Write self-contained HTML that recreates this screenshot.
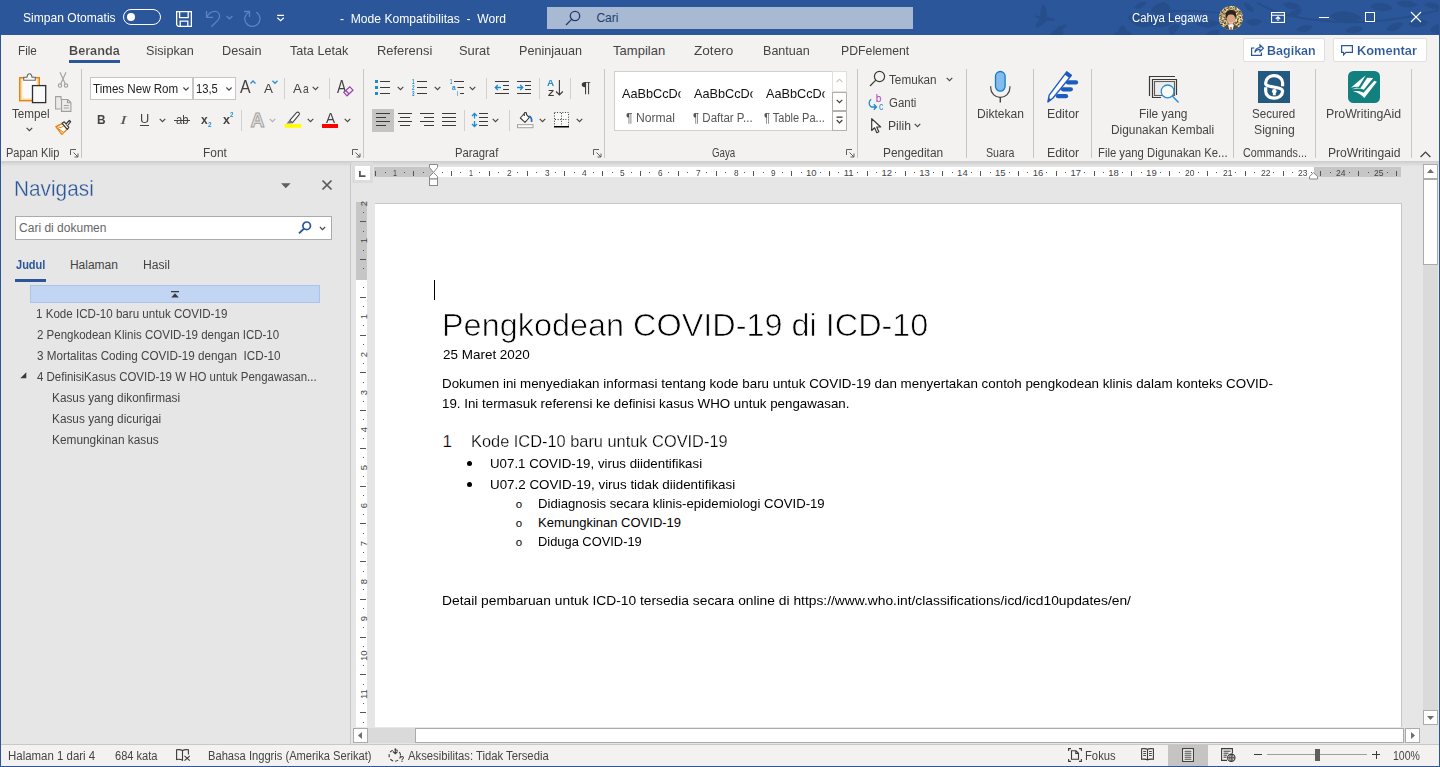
<!DOCTYPE html>
<html lang="id">
<head>
<meta charset="utf-8">
<title>Mode Kompatibilitas - Word</title>
<style>
*{box-sizing:border-box;margin:0;padding:0}
html,body{width:1440px;height:767px;overflow:hidden;background:#e6e6e6}
body{font-family:"Liberation Sans",sans-serif;font-size:12px;color:#444;position:relative}
.a{position:absolute}
.t{position:absolute;white-space:pre;line-height:1;transform-origin:0 0}
svg{position:absolute;overflow:visible}
#title{left:0;top:0;width:1440px;height:35px;background:#2b579a}
#search{left:547px;top:7px;width:366px;height:22px;background:#a7b9d3}
#tabs{left:1px;top:35px;width:1438px;height:30px;background:#f3f2f1}
#ribbon{left:1px;top:65px;width:1438px;height:96px;background:#f3f2f1}
#ribshadow{left:1px;top:161px;width:1438px;height:6px;background:linear-gradient(#cdcbca 0,#d3d3d3 25%,#dadada 50%,#e1e1e1 75%,#e6e6e6 100%)}
.gsep{position:absolute;top:69px;width:1px;height:89px;background:#c8c6c4}
.sep{position:absolute;width:1px;height:21px;background:#d2d0ce}
.box{position:absolute;background:#fff;border:1px solid #c8c6c4}
#nav{left:1px;top:167px;width:349px;height:577px;background:#e6e6e6}
#navdiv{left:350px;top:164px;width:1px;height:581px;background:#c6c6c6}
#page{left:375px;top:203px;width:1027px;height:524px;background:#fff;border-top:1px solid #c6c6c6;border-right:1px solid #c6c6c6}
#status{left:1px;top:745px;width:1438px;height:21px;background:#f3f2f1}
#frameL{left:0;top:0;width:1px;height:767px;background:#2b579a}
#frameR{left:1439px;top:0;width:1px;height:767px;background:#2b579a}
#frameB{left:0;top:766px;width:1440px;height:1px;background:#2b579a}
.vr{font-size:9.5px;color:#444;width:9px;height:9px;text-align:center;transform:rotate(-90deg);transform-origin:50% 50%}

</style>
</head>
<body>
<div id="title" class="a"></div>
<!-- title bar decorative pattern -->
<svg id="deco" style="left:1000px;top:0" width="440" height="35" viewBox="1000 0 440 35">
<g fill="#264e8b">
<path d="M1043 4C1046 6 1047.500 10 1046.500 17L1054.500 18.500C1055.500 19.500 1055 21 1053 21L1047 20.500C1044 24 1040 27 1036.500 28C1035 27 1036 23 1039.500 19L1034 16.800L1035 15.200L1040.500 16.500C1040 11 1041 6 1043 4z"/>
<path d="M1050 35C1051 32 1053 30.500 1055.500 30C1056 27.500 1060 24.500 1066.500 24.500C1067.500 25.500 1066 27.500 1062.500 29.500C1063.500 31 1063.500 33 1063 35z"/>
<path d="M1113.500 35C1114 33 1116 32 1118.500 32C1118 28.500 1120 25.500 1122.500 25.500S1126.500 28 1126 31C1129 31 1131.500 32.500 1132.500 35z"/>
<path d="M1134 8C1137 3 1142 1 1146 2C1145 7 1140 10 1134 8z"/>
<path d="M1150 12C1152 6 1158 3 1164 2C1170 5 1172 9 1170 12C1164 15 1156 15 1150 12z"/>
<path d="M1127 17C1134 13 1143 13 1150 16C1158 14 1168 15 1176 20C1170 27 1160 29 1150 26C1142 29 1133 26 1127 17z"/>
<path d="M1168 28C1171 24 1176 23 1180 25C1178 31 1173 35 1170 35z"/>
<path d="M1168 10.500C1190 9 1210 11 1228 13L1228 14.500C1210 12.500 1190 10.500 1168 12z"/>
<path d="M1196 24C1202 19 1212 19 1220 23C1213 29 1203 29 1196 24z"/>
<path d="M1205 35C1208 31 1214 29 1219 30L1219 35z"/>
<path d="M1244 2C1249 3 1253 7 1254 12C1248 12 1244 8 1244 2z"/>
<path d="M1246 22C1250 18 1257 18 1262 21C1258 27 1251 27 1246 22z"/>
<path d="M1258 2C1275 12 1300 19 1340 21C1375 22 1410 17 1440 9V11C1410 19 1375 24 1340 23C1300 21 1273 14 1256 3z"/>
<path d="M1283 4C1288 1 1296 2 1301 7C1295 11 1287 10 1283 4z"/>
<path d="M1288 16C1290 11 1296 8 1302 9C1301 15 1295 18 1288 16z"/>
<path d="M1296 30C1300 25 1307 24 1313 26C1310 32 1302 34 1296 30z"/>
<path d="M1330 16C1338 9 1352 10 1362 18C1352 25 1338 24 1330 16z"/>
<path d="M1345 31C1349 26 1357 25 1363 28C1360 34 1351 35 1345 31z"/>
<path d="M1370 6C1376 1 1386 2 1393 8C1386 13 1376 12 1370 6z"/>
<path d="M1396 3C1402 -1 1412 0 1418 5C1412 9 1402 8 1396 3z"/>
<path d="M1386 30C1389 24 1396 21 1403 23C1401 30 1393 33 1386 30z"/>
<path d="M1408 24C1413 19 1422 18 1429 22C1424 28 1414 29 1408 24z"/>
<path d="M1424 4C1429 1 1436 2 1440 6V9C1434 10 1428 8 1424 4z"/>
<path d="M1430 30C1432 26 1436 24 1440 24V34C1436 34 1432 33 1430 30z"/>
</g></svg>
<div id="search" class="a"></div>
<!-- autosave toggle -->
<div class="a" style="left:123px;top:9px;width:38px;height:16px;border:1.5px solid #fff;border-radius:8px"></div>
<div class="a" style="left:127px;top:13px;width:8px;height:8px;border-radius:4px;background:#fff"></div>
<!-- save -->
<svg style="left:176px;top:11px" width="16" height="16" viewBox="0 0 16 16" fill="none" stroke="#fff" stroke-width="1.3"><path d="M0.650 0.650h14.700v14.700H2.200L0.650 13.800z"/><path d="M3.600 0.650v6h8.600v-6M4.200 15.350v-5.200h7.600v5.200"/></svg>
<!-- undo -->
<svg style="left:200px;top:5px" width="30" height="26" viewBox="0 0 30 26" fill="none" stroke="#5a84bf" stroke-width="1.3"><path d="M6.500 5.900v6.500h6.600"/><path d="M6.800 12.200C8 9.500 11 6.300 14.900 6.300c3 0 4.700 2.500 4.700 5 0 2.300-1.300 3.800-3 5.300L11.300 21.700"/></svg>
<svg style="left:226px;top:15px" width="7" height="5" viewBox="0 0 7 5" fill="none" stroke="#5a84bf" stroke-width="1.2"><path d="M0.600 1L3.500 3.800L6.400 1"/></svg>
<!-- redo -->
<svg style="left:240px;top:5px" width="30" height="26" viewBox="0 0 30 26" fill="none" stroke="#5a84bf" stroke-width="1.3"><path d="M4 6.500h5.500v5.500"/><path d="M9.400 6.800A7.600 7.600 0 1 0 16.200 7.200"/></svg>
<!-- customize QAT -->
<svg style="left:276px;top:14px" width="9" height="8" viewBox="0 0 9 8" fill="none" stroke="#fff" stroke-width="1.200"><path d="M1.200 1.300H8M1.400 3.800L4.600 6.800L7.800 3.800"/></svg>
<!-- search icon -->
<svg style="left:565px;top:10px" width="16" height="16" viewBox="0 0 16 16" fill="none" stroke="#1e3c6e" stroke-width="1.3"><circle cx="10" cy="6" r="4.700"/><path d="M6.600 9.400L1 15"/></svg>
<!-- avatar -->
<svg style="left:1219px;top:6px" width="24" height="24" viewBox="0 0 24 24"><defs><clipPath id="avc"><circle cx="12" cy="12" r="12"/></clipPath><filter id="avn" x="0" y="0" width="100%" height="100%" color-interpolation-filters="sRGB"><feTurbulence type="fractalNoise" baseFrequency="0.550" numOctaves="2" seed="7"/><feColorMatrix type="matrix" values="1.500 0 0 0 -0.080  1.450 0 0 0 -0.130  1.300 0 0 0 -0.220  0 0 0 0 1"/></filter></defs><g clip-path="url(#avc)"><rect width="24" height="24" fill="#a89872"/><rect width="24" height="24" filter="url(#avn)" opacity="1"/><path d="M6.500 9.500C6.500 5.500 9 4 12.300 4S17.500 6 17 10.500L16 12.500H7.500z" fill="#2e241d"/><ellipse cx="12" cy="12.800" rx="4.100" ry="5.300" fill="#dba583"/><path d="M8 9.800C9.500 8.300 14 8 16 9.800L16.200 8 12 6.500 7.800 8z" fill="#2e241d"/><path d="M9.200 15.300C10.500 16.800 13.500 16.800 14.800 15.300L14 17.500H10z" fill="#e9c0a8"/><path d="M3.500 24C4.500 20.500 7 19.300 9 18.800L12 21.500 15 18.800C17.500 19.300 19.500 20.500 20.500 24z" fill="#4a4d4c"/><path d="M9 18.800L12 18L15 18.800L13.500 24H10.500z" fill="#f3efe9"/><path d="M11.500 21L12.500 21L12.800 24H11.200z" fill="#a8431f"/></g></svg>
<!-- ribbon display options -->
<svg style="left:1271px;top:12px" width="14" height="11" viewBox="0 0 14 11" fill="none" stroke="#fff" stroke-width="1.1"><rect x="0.550" y="0.550" width="12.900" height="9.900"/><path d="M0.500 3.200h13M7 9V5M4.800 7L7 4.800 9.200 7"/></svg>
<!-- min / max / close -->
<div class="a" style="left:1319px;top:17px;width:10px;height:1px;background:#fff"></div>
<div class="a" style="left:1365px;top:12px;width:10px;height:10px;border:1px solid #fff"></div>
<svg style="left:1411px;top:12px" width="10" height="10" viewBox="0 0 10 10" stroke="#fff" stroke-width="1.1"><path d="M0 0L10 10M10 0L0 10"/></svg>

<div id="tabs" class="a"></div>
<div class="a" style="left:69px;top:60px;width:51px;height:3px;background:#2b579a"></div>
<!-- share / comment buttons -->
<div class="a" style="left:1243px;top:38px;width:82px;height:24px;background:#fff;border:1px solid #e1dfdd;border-radius:2px"></div>
<div class="a" style="left:1333px;top:38px;width:94px;height:24px;background:#fff;border:1px solid #e1dfdd;border-radius:2px"></div>
<svg style="left:1251px;top:44px" width="13" height="12" viewBox="0 0 13 12" fill="none" stroke="#2b579a" stroke-width="1.2"><path d="M3.500 4H0.600v7.400h9.800V8.500"/><path d="M3.800 8.500c0.400-3 2.300-4.800 5.200-5V1l3.400 3.300L9 7.600V5.300C6.500 5.300 4.800 6.300 3.800 8.500z"/></svg>
<svg style="left:1341px;top:45px" width="12" height="11" viewBox="0 0 12 11" fill="none" stroke="#2b579a" stroke-width="1.2"><path d="M0.600 0.600h10.800v6.800H5L2.600 9.800V7.400H0.600z"/></svg>

<div id="ribbon" class="a"></div>
<div id="ribshadow" class="a"></div>
<!--RIBBON-->
<!-- ===== Clipboard group ===== -->
<svg style="left:19px;top:73px" width="28" height="31" viewBox="0 0 28 31">
<rect x="0.700" y="4.700" width="19.600" height="23" fill="#fbd79a" stroke="#e8820e" stroke-width="1.400"/>
<rect x="3.200" y="6" width="14.600" height="19.500" fill="#fafafa"/>
<path d="M4.700 7.200V4.200h3.300C8.200 2 9.200 0.700 10.500 0.700S12.800 2 13 4.200h3.300v3z" fill="#fafafa" stroke="#6a6a6a" stroke-width="1.100"/>
<rect x="13.500" y="12.600" width="13.200" height="17" fill="#fafafa" stroke="#2f2f2f" stroke-width="1.300"/>
</svg>
<svg style="left:26px;top:127px" width="7" height="5" viewBox="0 0 7 5" fill="none" stroke="#444" stroke-width="1.200"><path d="M0.600 0.800L3.400 3.600L6.200 0.800"/></svg>
<!-- cut -->
<svg style="left:58px;top:72px" width="10" height="16" viewBox="0 0 10 16" fill="none" stroke="#a19f9d" stroke-width="1.100"><path d="M2 0.300L7.300 12M8 0.300L2.700 12"/><circle cx="2" cy="13.600" r="1.700"/><circle cx="8" cy="13.600" r="1.700"/></svg>
<!-- copy -->
<svg style="left:55px;top:96px" width="17" height="16" viewBox="0 0 17 16" fill="#ebebeb" stroke="#a19f9d" stroke-width="1.100"><path d="M6 3.500V0.600H0.600V13h5"/><path d="M6.500 3.500h6.300l3.100 3.100V15.400H6.500z"/><path d="M12.500 3.800v3h3M8.800 9.500h5M8.800 12h5" fill="none"/></svg>
<!-- format painter -->
<svg style="left:55px;top:119px" width="17" height="17" viewBox="0 0 17 17">
<path d="M0.800 7.700L7.300 4.600L12.200 10.300L6.800 15.400z" fill="#fff" stroke="#e8820e" stroke-width="1.300" stroke-linejoin="round"/>
<path d="M3.200 9.500L8.800 13.500L6.800 15.400z" fill="#fbd79a" stroke="#e8820e" stroke-width="0.900"/>
<path d="M1 7.600L6 8.600L9 6.700" fill="none" stroke="#e8820e" stroke-width="0.900"/>
<path d="M7 4.200L9.300 2.800L13.800 8.300L12.300 10.300z" fill="#fff" stroke="#3b3a39" stroke-width="1.200" stroke-linejoin="round"/>
<path d="M11 5L14.300 1.500L15.700 2.700L12.700 6.500" fill="#fff" stroke="#3b3a39" stroke-width="1.200" stroke-linejoin="round"/>
</svg>
<!-- launcher -->
<svg class="lnch" style="left:70px;top:149px" width="9" height="9" viewBox="0 0 9 9" fill="none" stroke="#605e5c" stroke-width="1"><path d="M0.500 6V0.500H6M3.500 3.500L8 8M8 4.500V8H4.500"/></svg>
<div class="gsep" style="left:81px"></div>

<!-- ===== Font group ===== -->
<div class="box" style="left:90px;top:77px;width:103px;height:23px"></div>
<div class="box" style="left:193px;top:77px;width:43px;height:23px"></div>
<svg class="chv" style="left:183px;top:87px" width="6" height="4" viewBox="0 0 6 4" fill="none" stroke="#444" stroke-width="1.100"><path d="M0.400 0.500L3 3.100L5.600 0.500"/></svg>
<svg class="chv" style="left:226px;top:87px" width="6" height="4" viewBox="0 0 6 4" fill="none" stroke="#444" stroke-width="1.100"><path d="M0.400 0.500L3 3.100L5.600 0.500"/></svg>
<!-- grow / shrink font carets -->
<svg style="left:250px;top:80px" width="6" height="4" viewBox="0 0 6 4" fill="none" stroke="#2a8dd4" stroke-width="1.300"><path d="M0.500 3.500L3 1L5.500 3.500"/></svg>
<svg style="left:272px;top:80px" width="6" height="4" viewBox="0 0 6 4" fill="none" stroke="#2a8dd4" stroke-width="1.300"><path d="M0.500 0.800L3 3.300L5.500 0.800"/></svg>
<div class="sep" style="left:284px;top:78px"></div>
<svg class="chv" style="left:312px;top:86px" width="7" height="5" viewBox="0 0 7 5" fill="none" stroke="#444" stroke-width="1.100"><path d="M0.700 0.800L3.500 3.600L6.300 0.800"/></svg>
<div class="sep" style="left:329px;top:78px"></div>
<!-- clear formatting eraser -->
<!-- underline + chevrons -->
<div class="a" style="left:140px;top:125px;width:9px;height:1px;background:#444"></div>
<svg class="chv" style="left:159px;top:118px" width="7" height="5" viewBox="0 0 7 5" fill="none" stroke="#444" stroke-width="1.100"><path d="M0.700 0.800L3.500 3.600L6.300 0.800"/></svg>
<div class="a" style="left:174px;top:120px;width:16px;height:1px;background:#444"></div>
<div class="sep" style="left:241px;top:110px"></div>
<svg class="chv" style="left:269px;top:118px" width="7" height="5" viewBox="0 0 7 5" fill="none" stroke="#b0aeac" stroke-width="1.100"><path d="M0.700 0.800L3.500 3.600L6.300 0.800"/></svg>
<!-- highlighter -->
<svg style="left:284px;top:111px" width="18" height="18" viewBox="0 0 18 18">
<path d="M5.800 9.300L12.500 1.600c0.700-0.700 1.700-0.700 2.400 0s0.700 1.600 0.100 2.300L8.500 11.700z" fill="#fff" stroke="#444" stroke-width="1.100" stroke-linejoin="round"/>
<path d="M5.600 9L8.800 12L6.500 12.500L2.500 12.400z" fill="#777"/>
<rect x="0.700" y="13" width="16.500" height="3.800" fill="#ffff00"/>
</svg>
<svg class="chv" style="left:307px;top:118px" width="7" height="5" viewBox="0 0 7 5" fill="none" stroke="#444" stroke-width="1.100"><path d="M0.700 0.800L3.500 3.600L6.300 0.800"/></svg>
<div class="a" style="left:322px;top:124px;width:16px;height:4px;background:#ff0000"></div>
<svg class="chv" style="left:344px;top:118px" width="7" height="5" viewBox="0 0 7 5" fill="none" stroke="#444" stroke-width="1.100"><path d="M0.700 0.800L3.500 3.600L6.300 0.800"/></svg>

<svg class="lnch" style="left:352px;top:149px" width="9" height="9" viewBox="0 0 9 9" fill="none" stroke="#605e5c" stroke-width="1"><path d="M0.500 6V0.500H6M3.500 3.500L8 8M8 4.500V8H4.500"/></svg>
<div class="gsep" style="left:363px"></div>

<!-- ===== Paragraph group ===== -->
<!-- bullets -->
<svg style="left:375px;top:80px" width="16" height="15" viewBox="0 0 16 15"><g fill="#1e8bcd"><rect x="0" y="0" width="3" height="3"/><rect x="0" y="6" width="3" height="3"/><rect x="0" y="12" width="3" height="3"/></g><g fill="#3b3a39"><rect x="5" y="1" width="10" height="1"/><rect x="5" y="7" width="10" height="1"/><rect x="5" y="13" width="10" height="1"/></g></svg>
<svg class="chv" style="left:397px;top:86px" width="7" height="5" viewBox="0 0 7 5" fill="none" stroke="#444" stroke-width="1.100"><path d="M0.700 0.800L3.500 3.600L6.300 0.800"/></svg>
<!-- numbering lines -->
<svg style="left:417px;top:80px" width="10" height="15" viewBox="0 0 10 15" fill="#3b3a39"><rect x="0" y="1" width="10" height="1"/><rect x="0" y="7" width="10" height="1"/><rect x="0" y="13" width="10" height="1"/></svg>
<svg class="chv" style="left:434px;top:86px" width="7" height="5" viewBox="0 0 7 5" fill="none" stroke="#444" stroke-width="1.100"><path d="M0.700 0.800L3.500 3.600L6.300 0.800"/></svg>
<!-- multilevel lines -->
<svg style="left:454px;top:80px" width="10" height="15" viewBox="0 0 10 15" fill="#3b3a39"><rect x="0" y="1" width="10" height="1"/><rect x="3.400" y="7" width="6.600" height="1"/><rect x="6" y="13" width="4" height="1"/></svg>
<svg class="chv" style="left:469px;top:86px" width="7" height="5" viewBox="0 0 7 5" fill="none" stroke="#444" stroke-width="1.100"><path d="M0.700 0.800L3.500 3.600L6.300 0.800"/></svg>
<div class="sep" style="left:486px;top:78px"></div>
<!-- decrease indent -->
<svg style="left:494px;top:80px" width="16" height="15" viewBox="0 0 16 15"><g fill="#3b3a39"><rect x="1" y="1" width="14" height="1"/><rect x="9" y="5" width="6" height="1"/><rect x="9" y="9" width="6" height="1"/><rect x="1" y="13" width="14" height="1"/></g><path d="M7 7.500H1.300M3.800 5L1.300 7.500L3.800 10" fill="none" stroke="#1e8bcd" stroke-width="1.300"/></svg>
<!-- increase indent -->
<svg style="left:516px;top:80px" width="16" height="15" viewBox="0 0 16 15"><g fill="#3b3a39"><rect x="1" y="1" width="14" height="1"/><rect x="9" y="5" width="6" height="1"/><rect x="9" y="9" width="6" height="1"/><rect x="1" y="13" width="14" height="1"/></g><path d="M1 7.500H6.700M4.200 5L6.700 7.500L4.200 10" fill="none" stroke="#1e8bcd" stroke-width="1.300"/></svg>
<div class="sep" style="left:539px;top:78px"></div>
<!-- sort arrow -->
<svg style="left:555px;top:80px" width="9" height="16" viewBox="0 0 9 16" fill="none" stroke="#3b3a39" stroke-width="1.100"><path d="M4.400 0V15M1 11.500L4.400 15L7.800 11.500"/></svg>
<div class="sep" style="left:570px;top:78px"></div>
<!-- align buttons -->
<div class="a" style="left:372px;top:109px;width:22px;height:23px;background:#c6c4c2"></div>
<svg style="left:376px;top:113px" width="14" height="13" viewBox="0 0 14 13" fill="#3b3a39"><rect x="0" y="0" width="14" height="1"/><rect x="0" y="4" width="10" height="1"/><rect x="0" y="8" width="14" height="1"/><rect x="0" y="12" width="10" height="1"/></svg>
<svg style="left:398px;top:113px" width="14" height="13" viewBox="0 0 14 13" fill="#3b3a39"><rect x="0" y="0" width="14" height="1"/><rect x="2" y="4" width="10" height="1"/><rect x="0" y="8" width="14" height="1"/><rect x="2" y="12" width="10" height="1"/></svg>
<svg style="left:420px;top:113px" width="14" height="13" viewBox="0 0 14 13" fill="#3b3a39"><rect x="0" y="0" width="14" height="1"/><rect x="4" y="4" width="10" height="1"/><rect x="0" y="8" width="14" height="1"/><rect x="4" y="12" width="10" height="1"/></svg>
<svg style="left:442px;top:113px" width="14" height="13" viewBox="0 0 14 13" fill="#3b3a39"><rect x="0" y="0" width="14" height="1"/><rect x="0" y="4" width="14" height="1"/><rect x="0" y="8" width="14" height="1"/><rect x="0" y="12" width="14" height="1"/></svg>
<div class="sep" style="left:464px;top:110px"></div>
<!-- line spacing -->
<svg style="left:471px;top:113px" width="18" height="14" viewBox="0 0 18 14"><g fill="#3b3a39"><rect x="8" y="0" width="9" height="1"/><rect x="8" y="4" width="9" height="1"/><rect x="8" y="8" width="9" height="1"/><rect x="8" y="12" width="9" height="1"/></g><path d="M3.500 0.500V5.500M1 3L3.500 0.500L6 3M3.500 8V13.500M1 11L3.500 13.500L6 11" fill="none" stroke="#1e8bcd" stroke-width="1.300"/></svg>
<svg class="chv" style="left:492px;top:118px" width="7" height="5" viewBox="0 0 7 5" fill="none" stroke="#444" stroke-width="1.100"><path d="M0.700 0.800L3.500 3.600L6.300 0.800"/></svg>
<div class="sep" style="left:509px;top:110px"></div>
<!-- shading -->
<svg style="left:517px;top:111px" width="17" height="18" viewBox="0 0 17 18"><path d="M7.300 2.500L3.300 7L8 11.300L12.300 6.500L9.500 3.700V2.300C9.500 1.300 7.300 1.300 7.300 2.300V5" fill="#fff" stroke="#3b3a39" stroke-width="1.100" stroke-linejoin="round"/><path d="M12.300 5c2 1.200 2.600 3.300 2.300 6" fill="none" stroke="#1e6fbf" stroke-width="1.700"/><rect x="0.500" y="13.700" width="15.500" height="3" fill="#fff" stroke="#a19f9d" stroke-width="1"/></svg>
<svg class="chv" style="left:539px;top:118px" width="7" height="5" viewBox="0 0 7 5" fill="none" stroke="#444" stroke-width="1.100"><path d="M0.700 0.800L3.500 3.600L6.300 0.800"/></svg>
<!-- borders -->
<svg style="left:554px;top:112px" width="15" height="16" viewBox="0 0 15 16"><rect x="0.500" y="0.500" width="14" height="14" fill="#fafafa" stroke="#3b3a39" stroke-width="1" stroke-dasharray="1 1.600"/><path d="M7.500 1V14M1 7.500H14" stroke="#3b3a39" stroke-width="1" stroke-dasharray="1 1.600" fill="none"/><rect x="0" y="14" width="15" height="1.500" fill="#000"/></svg>
<svg class="chv" style="left:576px;top:118px" width="7" height="5" viewBox="0 0 7 5" fill="none" stroke="#444" stroke-width="1.100"><path d="M0.700 0.800L3.500 3.600L6.300 0.800"/></svg>
<svg class="lnch" style="left:593px;top:149px" width="9" height="9" viewBox="0 0 9 9" fill="none" stroke="#605e5c" stroke-width="1"><path d="M0.500 6V0.500H6M3.500 3.500L8 8M8 4.500V8H4.500"/></svg>
<div class="gsep" style="left:604px"></div>

<!-- ===== Styles gallery ===== -->
<div class="a" style="left:614px;top:71px;width:233px;height:60px;background:#fff;border:1px solid #d2d0ce"></div>
<div class="a" style="left:832px;top:71px;width:15px;height:21px;border:1px solid #e1dfdd;background:#fff"></div>
<div class="a" style="left:832px;top:92px;width:15px;height:19px;border:1px solid #b3b0ad;background:#fff"></div>
<div class="a" style="left:832px;top:111px;width:15px;height:20px;border:1px solid #b3b0ad;background:#fff"></div>
<svg style="left:836px;top:78px" width="7" height="5" viewBox="0 0 7 5" fill="none" stroke="#c8c6c4" stroke-width="1.100"><path d="M0.700 4L3.500 1.200L6.300 4"/></svg>
<svg style="left:836px;top:99px" width="7" height="5" viewBox="0 0 7 5" fill="none" stroke="#3b3a39" stroke-width="1.200"><path d="M0.700 0.800L3.500 3.600L6.300 0.800"/></svg>
<svg style="left:836px;top:116px" width="7" height="8" viewBox="0 0 7 8" fill="none" stroke="#3b3a39" stroke-width="1.200"><path d="M0.500 1.200H6.500M0.700 4L3.500 6.800L6.300 4"/></svg>
<svg class="lnch" style="left:846px;top:149px" width="9" height="9" viewBox="0 0 9 9" fill="none" stroke="#605e5c" stroke-width="1"><path d="M0.500 6V0.500H6M3.500 3.500L8 8M8 4.500V8H4.500"/></svg>
<div class="gsep" style="left:857px"></div>
<!-- ===== Editing ===== -->
<svg style="left:869px;top:70px" width="17" height="17" viewBox="0 0 17 17" fill="none" stroke="#3b3a39" stroke-width="1.200"><circle cx="10.500" cy="6.500" r="5.100"/><path d="M6.800 10.200L1 16"/></svg>
<svg class="chv" style="left:946px;top:77px" width="7" height="5" viewBox="0 0 7 5" fill="none" stroke="#444" stroke-width="1.100"><path d="M0.700 0.800L3.500 3.600L6.300 0.800"/></svg>
<svg style="left:868px;top:98px" width="10" height="13" viewBox="0 0 10 13" fill="none" stroke="#1e8bcd" stroke-width="1.300"><path d="M3.200 1.200C0.800 3 0.500 6 2.500 8.300L3.500 9H8.300M5.800 6.300L8.500 9L5.800 11.700"/></svg>
<svg style="left:871px;top:118px" width="11" height="16" viewBox="0 0 11 16" fill="#fff" stroke="#3b3a39" stroke-width="1.200" stroke-linejoin="round"><path d="M0.700 0.700V12.500L3.600 9.800L5.800 14.700L7.800 13.800L5.700 9H9.700z"/></svg>
<svg class="chv" style="left:914px;top:123px" width="7" height="5" viewBox="0 0 7 5" fill="none" stroke="#444" stroke-width="1.100"><path d="M0.700 0.800L3.500 3.600L6.300 0.800"/></svg>
<div class="gsep" style="left:966px"></div>
<!-- ===== Dictate ===== -->
<svg style="left:989px;top:70px" width="23" height="34" viewBox="0 0 23 34"><rect x="6.500" y="1.500" width="9.600" height="19.600" rx="4.800" fill="#83bcec" stroke="#1479c9" stroke-width="1.300"/><path d="M1.700 16.200v1.600a9.600 9.600 0 0 0 19.200 0v-1.600" fill="none" stroke="#444" stroke-width="1.200"/><path d="M11.300 27.300V32.600" stroke="#444" stroke-width="1.400"/></svg>
<div class="gsep" style="left:1033px"></div>
<!-- ===== Editor ===== -->
<svg style="left:1046px;top:70px" width="34" height="34" viewBox="0 0 34 34"><g stroke="#1b5cbe" stroke-width="4.300" stroke-linecap="round"><path d="M22 12.400H30"/><path d="M17 19.300H24.800"/><path d="M12 26.200H20"/></g><path d="M20.700 1.800L25.400 5.400L6.800 28.300L1.900 31.900L3.200 25.200z" fill="#fff" stroke="#1b5cbe" stroke-width="1.400" stroke-linejoin="round"/><path d="M20.700 1.800L25.400 5.400L23.300 8L18.600 4.400z" fill="#1b5cbe"/><path d="M1.900 31.900L2.700 27.800L5.300 29.700z" fill="#1b5cbe"/></svg>
<div class="gsep" style="left:1091px"></div>
<!-- ===== Reuse files ===== -->
<svg style="left:1148px;top:75px" width="32" height="29" viewBox="0 0 32 29" fill="none"><path d="M27 1.500H1.500V21" stroke="#3b3a39" stroke-width="1.200"/><path d="M13 22.500H4.500V4.500H28.500V20" stroke="#3b3a39" stroke-width="1.200"/><rect x="6.500" y="6.500" width="20" height="14" fill="#ececec" stroke="#605e5c" stroke-width="1.100"/><circle cx="19.600" cy="16.400" r="6.400" fill="#fafafa" stroke="#2a8dd4" stroke-width="1.300"/><path d="M24.300 21L30.600 27.600" stroke="#2a8dd4" stroke-width="1.400"/></svg>
<div class="gsep" style="left:1233px"></div>
<!-- ===== Secured Signing ===== -->
<svg style="left:1258px;top:71px" width="32" height="32" viewBox="0 0 32 32"><rect width="32" height="32" fill="#255a80"/><path d="M24.600 15.300V11.700A8.450 7 0 0 0 7.700 11.700V12.800C7.700 16.800 24.600 15.200 24.600 20.200A8.450 7 0 0 1 7.700 20.200V16.300" fill="none" stroke="#fff" stroke-width="3.200"/><circle cx="16.300" cy="20.200" r="2.300" fill="#fff"/><path d="M15.200 20.500h2.200l0.500 3.800h-3.200z" fill="#fff"/></svg>
<div class="gsep" style="left:1315px"></div>
<!-- ===== ProWritingAid ===== -->
<svg style="left:1348px;top:71px" width="32" height="32" viewBox="0 0 32 32"><rect width="32" height="32" rx="5.500" fill="#12807f"/><g fill="#fff"><path d="M2.900 16.800C8 12.500 13 8 17.700 4.600L10.800 15.800C8 15.500 5.500 16 2.900 16.800z"/><path d="M19.200 6.800L25.200 7.100L15.800 18.700C12 16.800 8 17.300 4.100 18.500C7 16.500 10 16.200 12.300 17.300z"/><path d="M26.200 9.800L28.900 10.800L16.300 26.900C13 23.500 9.500 21.300 5.100 20.200C9 19.500 12.500 20 15.500 21.800z"/></g></svg>
<div class="gsep" style="left:1411px"></div>
<svg style="left:1420px;top:151px" width="11" height="7" viewBox="0 0 11 7" fill="none" stroke="#3b3a39" stroke-width="1.200"><path d="M0.600 6L5.500 1.100L10.400 6"/></svg>

<!--R4-->
<div id="nav" class="a"></div>
<div id="navdiv" class="a"></div>
<!-- ===== Navigation pane ===== -->
<svg style="left:281px;top:183px" width="10" height="6" viewBox="0 0 10 6"><path d="M0 0.300H9.600L4.800 5.300z" fill="#605e5c"/></svg>
<svg style="left:322px;top:180px" width="10" height="10" viewBox="0 0 10 10" stroke="#5a5856" stroke-width="1.700"><path d="M0.500 0.500L9.500 9.500M9.500 0.500L0.500 9.500"/></svg>
<div class="a" style="left:15px;top:216px;width:317px;height:24px;background:#fff;border:1px solid #ababab"></div>
<svg style="left:298px;top:221px" width="14" height="13" viewBox="0 0 14 13" fill="none" stroke="#2b579a" stroke-width="1.700"><circle cx="8.700" cy="4.800" r="3.800"/><path d="M6 7.600L1 12.400" stroke-width="2"/></svg>
<svg style="left:319px;top:226px" width="7" height="5" viewBox="0 0 7 5" fill="none" stroke="#444" stroke-width="1.100"><path d="M0.900 1L3.500 3.600L6.100 1"/></svg>
<div class="a" style="left:15px;top:279px;width:31px;height:3px;background:#2b579a"></div>
<div class="a" style="left:30px;top:285px;width:290px;height:18px;background:#c2d5f2;border:1px solid #a8c3ec"></div>
<svg style="left:171px;top:291px" width="8" height="7" viewBox="0 0 8 7" fill="#3b3a39"><rect x="0" y="0" width="8" height="1.300"/><path d="M4 2.300L7.800 6.500H0.200z"/></svg>
<svg style="left:20px;top:372px" width="7" height="7" viewBox="0 0 7 7"><path d="M6.300 0.300V6.300H0.300z" fill="#3b3a39"/></svg>

<!-- ===== Document area: rulers & scrollbars ===== -->
<div class="a" style="left:352px;top:162px;width:21px;height:21px;background:#dcdcdc"></div>
<div class="a" style="left:355px;top:166px;width:15px;height:14px;background:#fff"></div>
<svg style="left:359px;top:171px" width="7" height="6" viewBox="0 0 7 6" fill="none" stroke="#555" stroke-width="1.800"><path d="M0.900 0V5.100H6.500"/></svg>
<div class="a" style="left:374px;top:167px;width:1027px;height:10px;background:#c6c6c6"></div>
<div class="a" style="left:433px;top:167px;width:881px;height:10px;background:#fff"></div>
<svg style="left:0;top:0" width="1440" height="200" viewBox="0 0 1440 200" shape-rendering="crispEdges"><path d="M375 171h1v5h-1zM413 171h1v5h-1zM451 171h1v5h-1zM489 171h1v5h-1zM527 171h1v5h-1zM564 171h1v5h-1zM602 171h1v5h-1zM640 171h1v5h-1zM678 171h1v5h-1zM716 171h1v5h-1zM753 171h1v5h-1zM791 171h1v5h-1zM829 171h1v5h-1zM867 171h1v5h-1zM905 171h1v5h-1zM942 171h1v5h-1zM980 171h1v5h-1zM1018 171h1v5h-1zM1056 171h1v5h-1zM1094 171h1v5h-1zM1131 171h1v5h-1zM1169 171h1v5h-1zM1207 171h1v5h-1zM1245 171h1v5h-1zM1283 171h1v5h-1zM1320 171h1v5h-1zM1358 171h1v5h-1zM1396 171h1v5h-1zM385 172h1v1h-1zM404 172h1v1h-1zM423 172h1v1h-1zM442 172h1v1h-1zM460 172h1v1h-1zM479 172h1v1h-1zM498 172h1v1h-1zM517 172h1v1h-1zM536 172h1v1h-1zM555 172h1v1h-1zM574 172h1v1h-1zM593 172h1v1h-1zM612 172h1v1h-1zM631 172h1v1h-1zM649 172h1v1h-1zM668 172h1v1h-1zM687 172h1v1h-1zM706 172h1v1h-1zM725 172h1v1h-1zM744 172h1v1h-1zM763 172h1v1h-1zM782 172h1v1h-1zM801 172h1v1h-1zM820 172h1v1h-1zM838 172h1v1h-1zM857 172h1v1h-1zM876 172h1v1h-1zM895 172h1v1h-1zM914 172h1v1h-1zM933 172h1v1h-1zM952 172h1v1h-1zM971 172h1v1h-1zM990 172h1v1h-1zM1009 172h1v1h-1zM1027 172h1v1h-1zM1046 172h1v1h-1zM1065 172h1v1h-1zM1084 172h1v1h-1zM1103 172h1v1h-1zM1122 172h1v1h-1zM1141 172h1v1h-1zM1160 172h1v1h-1zM1179 172h1v1h-1zM1198 172h1v1h-1zM1216 172h1v1h-1zM1235 172h1v1h-1zM1254 172h1v1h-1zM1273 172h1v1h-1zM1292 172h1v1h-1zM1311 172h1v1h-1zM1330 172h1v1h-1zM1349 172h1v1h-1zM1368 172h1v1h-1zM1387 172h1v1h-1z" fill="#555"/></svg>
<svg style="left:429px;top:164px" width="10" height="23" viewBox="0 0 10 23" fill="#fff" stroke="#8a8a8a" stroke-width="1"><path d="M0.500 0.500H8.500V3.500L4.500 8.500L0.500 3.500z"/><path d="M4.500 8.500L8.500 12.500V15H0.500V12.500z"/><rect x="0.500" y="15" width="8" height="6.500"/></svg>
<svg style="left:1309px;top:172px" width="10" height="8" viewBox="0 0 10 8" fill="#fff" stroke="#8a8a8a" stroke-width="1"><path d="M4.500 0.700L8.500 4.500V7H0.500V4.500z"/></svg>
<div class="a" style="left:356px;top:202px;width:11px;height:525px;background:#fff"></div>
<div class="a" style="left:356px;top:202px;width:11px;height:78px;background:#c6c6c6"></div>
<svg style="left:0;top:0" width="400" height="767" viewBox="0 0 400 767" shape-rendering="crispEdges"><path d="M360 221h6v1h-6zM360 259h6v1h-6zM360 297h6v1h-6zM360 335h6v1h-6zM360 372h6v1h-6zM360 410h6v1h-6zM360 448h6v1h-6zM360 486h6v1h-6zM360 523h6v1h-6zM360 561h6v1h-6zM360 599h6v1h-6zM360 637h6v1h-6zM360 674h6v1h-6zM360 712h6v1h-6zM363 212h1v1h-1zM363 231h1v1h-1zM363 250h1v1h-1zM363 268h1v1h-1zM363 287h1v1h-1zM363 306h1v1h-1zM363 325h1v1h-1zM363 344h1v1h-1zM363 363h1v1h-1zM363 382h1v1h-1zM363 401h1v1h-1zM363 419h1v1h-1zM363 438h1v1h-1zM363 457h1v1h-1zM363 476h1v1h-1zM363 495h1v1h-1zM363 514h1v1h-1zM363 533h1v1h-1zM363 552h1v1h-1zM363 571h1v1h-1zM363 589h1v1h-1zM363 608h1v1h-1zM363 627h1v1h-1zM363 646h1v1h-1zM363 665h1v1h-1zM363 684h1v1h-1zM363 703h1v1h-1zM363 722h1v1h-1z" fill="#555"/></svg>
<div class="a" style="left:1423px;top:164px;width:15px;height:561px;background:#dadada"></div>
<div class="a" style="left:1423px;top:164px;width:15px;height:15px;background:#fff;border:1px solid #ababab"></div>
<svg style="left:1427px;top:169px" width="7" height="4" viewBox="0 0 7 4"><path d="M3.500 0L7 4H0z" fill="#6e6e6e"/></svg>
<div class="a" style="left:1423px;top:179px;width:15px;height:86px;background:#fff;border:1px solid #ababab"></div>
<div class="a" style="left:1423px;top:710px;width:15px;height:15px;background:#fff;border:1px solid #ababab"></div>
<svg style="left:1427px;top:716px" width="7" height="4" viewBox="0 0 7 4"><path d="M0 0H7L3.500 4z" fill="#6e6e6e"/></svg>
<div class="a" style="left:353px;top:728px;width:1067px;height:15px;background:#dadada"></div>
<div class="a" style="left:353px;top:728px;width:15px;height:15px;background:#fff;border:1px solid #ababab"></div>
<svg style="left:358px;top:732px" width="4" height="7" viewBox="0 0 4 7"><path d="M4 0V7L0 3.500z" fill="#6e6e6e"/></svg>
<div class="a" style="left:415px;top:728px;width:989px;height:15px;background:#fff;border:1px solid #ababab"></div>
<div class="a" style="left:1405px;top:728px;width:15px;height:15px;background:#fff;border:1px solid #ababab"></div>
<svg style="left:1411px;top:732px" width="4" height="7" viewBox="0 0 4 7"><path d="M0 0V7L4 3.500z" fill="#6e6e6e"/></svg>

<div id="page" class="a"></div>
<!-- text cursor -->
<div class="a" style="left:434px;top:280px;width:1px;height:20px;background:#000"></div>
<!-- bullets -->
<div class="a" style="left:467px;top:461px;width:5px;height:5px;border-radius:3px;background:#000"></div>
<div class="a" style="left:467px;top:482px;width:5px;height:5px;border-radius:3px;background:#000"></div>
<!-- vertical ruler numbers -->
<span class="t vr" style="left:358.500px;top:198.6px">2</span>
<span class="t vr" style="left:358.500px;top:236.4px">1</span>
<span class="t vr" style="left:358.500px;top:312.0px">1</span>
<span class="t vr" style="left:358.500px;top:349.8px">2</span>
<span class="t vr" style="left:358.500px;top:387.6px">3</span>
<span class="t vr" style="left:358.500px;top:425.4px">4</span>
<span class="t vr" style="left:358.500px;top:463.2px">5</span>
<span class="t vr" style="left:358.500px;top:501.0px">6</span>
<span class="t vr" style="left:358.500px;top:538.8px">7</span>
<span class="t vr" style="left:358.500px;top:576.6px">8</span>
<span class="t vr" style="left:358.500px;top:614.4px">9</span>
<span class="t vr" style="left:358.500px;top:652.2px">10</span>
<span class="t vr" style="left:358.500px;top:690.0px">11</span>

<div id="status" class="a"></div>
<!-- ===== Status bar ===== -->
<div class="a" style="left:1px;top:744px;width:1438px;height:1px;background:#c8c8c8"></div>
<!-- proofing -->
<svg style="left:176px;top:749px" width="15" height="12" viewBox="0 0 15 12" fill="none" stroke="#3b3a39" stroke-width="1.100"><path d="M6.500 1.500C5 0.600 2.500 0.500 0.600 0.800V10.500C2.500 10.200 5 10.300 6.500 11.200zM6.500 1.500C8 0.600 10.500 0.500 12.400 0.800V5.500"/><path d="M8.500 6.800L13.800 11.600M13.800 6.800L8.500 11.600"/></svg>
<!-- accessibility -->
<svg style="left:388px;top:747px" width="17" height="16" viewBox="0 0 17 16" fill="none" stroke="#3b3a39" stroke-width="1.100"><circle cx="6.800" cy="8.500" r="5.700" stroke-dasharray="3.200 2"/><path d="M7.300 1.200V6.500M5 4.500L7.300 6.800L9.600 4.500"/></svg>
<!-- focus -->
<svg style="left:1068px;top:748px" width="14" height="14" viewBox="0 0 14 14" fill="none" stroke="#3b3a39" stroke-width="1.100"><path d="M0.600 3V0.600H3M11 0.600H13.400V3M13.400 11V13.400H11M3 13.400H0.600V11"/><path d="M3.500 2.800H8L10.500 5.300V11.200H3.500zM7.800 3V5.500H10.300"/></svg>
<!-- read mode -->
<svg style="left:1141px;top:748px" width="14" height="13" viewBox="0 0 14 13" fill="none" stroke="#3b3a39" stroke-width="1.100"><path d="M6.500 1.300C5 0.500 2.500 0.500 0.600 0.800V11.300C2.500 11 5 11 6.500 11.900zM6.500 1.300C8 0.500 10.500 0.500 12.400 0.800V11.300C10.500 11 8 11 6.500 11.900"/><path d="M2.200 3.500H5M2.200 5.500H5M2.200 7.500H5M8 3.500H10.800M8 5.500H10.800M8 7.500H10.800" stroke-width="0.900"/></svg>
<!-- print layout (selected) -->
<div class="a" style="left:1168px;top:745px;width:40px;height:21px;background:#c6c4c2"></div>
<svg style="left:1182px;top:748px" width="12" height="14" viewBox="0 0 12 14" fill="#fff" stroke="#3b3a39" stroke-width="1.100"><rect x="0.600" y="0.600" width="10.800" height="12.800"/><path d="M2.500 3.200H9.500M2.500 5.200H9.500M2.500 7.200H9.500M2.500 9.200H9.500M2.500 11.200H9.500" stroke-width="1"/></svg>
<!-- web layout -->
<svg style="left:1221px;top:748px" width="15" height="14" viewBox="0 0 15 14" fill="none" stroke="#3b3a39" stroke-width="1.100"><path d="M6 12.400H0.600V0.600H11.400V5.500"/><path d="M2.500 3.200H9.500M2.500 5.200H7.500M2.500 7.200H6M2.500 9.200H5.500" stroke-width="1"/><circle cx="10.300" cy="9.800" r="3.700" fill="#f3f2f1"/><path d="M6.600 9.800H14M10.300 6.100V13.500" stroke-width="0.900"/><ellipse cx="10.300" cy="9.800" rx="1.700" ry="3.700" stroke-width="0.800"/></svg>
<!-- zoom slider -->
<div class="a" style="left:1254px;top:754px;width:8px;height:1px;background:#3b3a39"></div>
<div class="a" style="left:1267px;top:754px;width:100px;height:1px;background:#a19f9d"></div>
<div class="a" style="left:1315px;top:749px;width:5px;height:12px;background:#605e5c"></div>
<div class="a" style="left:1372px;top:754px;width:8px;height:1px;background:#3b3a39"></div>
<div class="a" style="left:1375.500px;top:751px;width:1px;height:8px;background:#3b3a39"></div>

<div id="frameL" class="a"></div>
<div id="frameR" class="a"></div>
<div id="frameB" class="a"></div>

<!-- text layer -->
<span class="t" style="left:23.4px;top:12px;font-size:12px;color:#fff;transform:scaleX(1.0066);">Simpan Otomatis</span>
<span class="t" style="left:340.4px;top:13px;font-size:12px;color:#fff;transform:scaleX(1.0091);">-  Mode Kompatibilitas  -  Word</span>
<span class="t" style="left:596.4px;top:12px;font-size:12px;color:#1e3c6e;">Cari</span>
<span class="t" style="left:1132.4px;top:12px;font-size:12px;color:#fff;transform:scaleX(0.9500);">Cahya Legawa</span>
<span class="t" style="left:17.8px;top:44px;font-size:13px;color:#444;transform:scaleX(0.9000);">File</span>
<span class="t" style="left:68.7px;top:44px;font-size:13px;color:#444;transform:scaleX(0.9745);font-weight:700;-webkit-text-stroke:0.15px #f3f2f1;">Beranda</span>
<span class="t" style="left:146.4px;top:44px;font-size:13px;color:#444;transform:scaleX(0.9729);">Sisipkan</span>
<span class="t" style="left:221.7px;top:44px;font-size:13px;color:#444;transform:scaleX(0.9744);">Desain</span>
<span class="t" style="left:290.4px;top:44px;font-size:13px;color:#444;transform:scaleX(0.9717);">Tata Letak</span>
<span class="t" style="left:376.7px;top:44px;font-size:13px;color:#444;transform:scaleX(0.9944);">Referensi</span>
<span class="t" style="left:459.4px;top:44px;font-size:13px;color:#444;transform:scaleX(0.9900);">Surat</span>
<span class="t" style="left:519.4px;top:44px;font-size:13px;color:#444;transform:scaleX(0.9688);">Peninjauan</span>
<span class="t" style="left:613.1px;top:44px;font-size:13px;color:#444;">Tampilan</span>
<span class="t" style="left:694.4px;top:44px;font-size:13px;color:#444;transform:scaleX(1.0459);">Zotero</span>
<span class="t" style="left:762.7px;top:44px;font-size:13px;color:#444;transform:scaleX(0.9660);">Bantuan</span>
<span class="t" style="left:840.8px;top:44px;font-size:13px;color:#444;transform:scaleX(0.9444);">PDFelement</span>
<span class="t" style="left:1266.9px;top:44px;font-size:13px;color:#2b579a;transform:scaleX(0.9633);font-weight:700;-webkit-text-stroke:0.15px #fff;">Bagikan</span>
<span class="t" style="left:1356.9px;top:44px;font-size:13px;color:#2b579a;transform:scaleX(0.9867);font-weight:700;-webkit-text-stroke:0.15px #fff;">Komentar</span>
<span class="t" style="left:11.9px;top:108px;font-size:12px;color:#444;transform:scaleX(0.9737);">Tempel</span>
<span class="t" style="left:6.0px;top:147px;font-size:12px;color:#444;transform:scaleX(0.9211);">Papan Klip</span>
<span class="t" style="left:92.6px;top:83px;font-size:12px;color:#222;transform:scaleX(0.9659);">Times New Rom</span>
<span class="t" style="left:195.9px;top:83px;font-size:12px;color:#222;transform:scaleX(0.9364);">13,5</span>
<span class="t" style="left:203.2px;top:147px;font-size:12px;color:#444;transform:scaleX(0.9913);">Font</span>
<span class="t" style="left:455.2px;top:147px;font-size:12px;color:#444;transform:scaleX(0.9400);">Paragraf</span>
<span class="t" style="left:622.1px;top:87px;font-size:13px;color:#111;transform:scaleX(0.9762);width:59.7px;overflow:hidden;">AaBbCcDc</span>
<span class="t" style="left:694.0px;top:87px;font-size:13px;color:#111;transform:scaleX(0.9762);width:59.7px;overflow:hidden;">AaBbCcDc</span>
<span class="t" style="left:766.1px;top:87px;font-size:13px;color:#111;transform:scaleX(0.9762);width:59.7px;overflow:hidden;">AaBbCcDc</span>
<span class="t" style="left:626.4px;top:112px;font-size:12px;color:#555;transform:scaleX(1.0104);">¶ Normal</span>
<span class="t" style="left:693.4px;top:112px;font-size:12px;color:#555;transform:scaleX(0.9581);">¶ Daftar P...</span>
<span class="t" style="left:764.4px;top:112px;font-size:12px;color:#555;transform:scaleX(0.9167);">¶ Table Pa...</span>
<span class="t" style="left:712.2px;top:147px;font-size:12px;color:#444;transform:scaleX(0.8103);">Gaya</span>
<span class="t" style="left:889.1px;top:74px;font-size:12px;color:#444;transform:scaleX(0.9771);">Temukan</span>
<span class="t" style="left:889.1px;top:97px;font-size:12px;color:#444;transform:scaleX(0.9536);">Ganti</span>
<span class="t" style="left:888.1px;top:120px;font-size:12px;color:#444;transform:scaleX(1.0143);">Pilih</span>
<span class="t" style="left:882.6px;top:147px;font-size:12px;color:#444;transform:scaleX(0.9898);">Pengeditan</span>
<span class="t" style="left:976.9px;top:108px;font-size:12px;color:#444;transform:scaleX(1.0067);">Diktekan</span>
<span class="t" style="left:986.0px;top:147px;font-size:12px;color:#444;transform:scaleX(0.8871);">Suara</span>
<span class="t" style="left:1046.7px;top:108px;font-size:12px;color:#444;transform:scaleX(1.0233);">Editor</span>
<span class="t" style="left:1046.7px;top:147px;font-size:12px;color:#444;transform:scaleX(1.0233);">Editor</span>
<span class="t" style="left:1138.6px;top:108px;font-size:12px;color:#444;transform:scaleX(0.9957);">File yang</span>
<span class="t" style="left:1111.0px;top:124px;font-size:12px;color:#444;transform:scaleX(0.9913);">Digunakan Kembali</span>
<span class="t" style="left:1098.1px;top:147px;font-size:12px;color:#444;transform:scaleX(0.9426);">File yang Digunakan Ke...</span>
<span class="t" style="left:1252.4px;top:108px;font-size:12px;color:#444;transform:scaleX(0.9674);">Secured</span>
<span class="t" style="left:1254.0px;top:124px;font-size:12px;color:#444;transform:scaleX(1.0184);">Signing</span>
<span class="t" style="left:1243.2px;top:147px;font-size:12px;color:#444;transform:scaleX(0.8958);">Commands...</span>
<span class="t" style="left:1326.0px;top:108px;font-size:12px;color:#444;transform:scaleX(1.0278);">ProWritingAid</span>
<span class="t" style="left:1328.0px;top:147px;font-size:12px;color:#444;transform:scaleX(1.0100);">ProWritingaid</span>
<span class="t" style="left:14.3px;top:178px;font-size:22px;color:#2b579a;transform:scaleX(0.9457);-webkit-text-stroke:0.3px #e6e6e6;">Navigasi</span>
<span class="t" style="left:19.1px;top:222px;font-size:12px;color:#666;">Cari di dokumen</span>
<span class="t" style="left:16.2px;top:259px;font-size:12px;color:#2b579a;transform:scaleX(0.9188);font-weight:700;">Judul</span>
<span class="t" style="left:69.9px;top:259px;font-size:12px;color:#444;">Halaman</span>
<span class="t" style="left:142.8px;top:259px;font-size:12px;color:#444;transform:scaleX(1.0120);">Hasil</span>
<span class="t" style="left:35.9px;top:308px;font-size:12px;color:#444;transform:scaleX(0.9660);">1 Kode ICD-10 baru untuk COVID-19</span>
<span class="t" style="left:36.9px;top:329px;font-size:12px;color:#444;transform:scaleX(0.9577);">2 Pengkodean Klinis COVID-19 dengan ICD-10</span>
<span class="t" style="left:36.9px;top:350px;font-size:12px;color:#444;transform:scaleX(0.9740);">3 Mortalitas Coding COVID-19 dengan  ICD-10</span>
<span class="t" style="left:36.9px;top:371px;font-size:12px;color:#444;transform:scaleX(0.9548);">4 DefinisiKasus COVID-19 W HO untuk Pengawasan...</span>
<span class="t" style="left:51.7px;top:392px;font-size:12px;color:#444;transform:scaleX(0.9853);">Kasus yang dikonfirmasi</span>
<span class="t" style="left:51.7px;top:413px;font-size:12px;color:#444;transform:scaleX(0.9853);">Kasus yang dicurigai</span>
<span class="t" style="left:51.7px;top:434px;font-size:12px;color:#444;transform:scaleX(0.9879);">Kemungkinan kasus</span>
<span class="t" style="left:441.8px;top:310px;font-size:30.5px;color:#000;transform:scaleX(1.0626);-webkit-text-stroke:0.7px #fff;">Pengkodean COVID-19 di ICD-10</span>
<span class="t" style="left:443.4px;top:348px;font-size:13px;color:#000;transform:scaleX(1.0357);">25 Maret 2020</span>
<span class="t" style="left:442.4px;top:377px;font-size:13px;color:#000;transform:scaleX(1.0285);">Dokumen ini menyediakan informasi tentang kode baru untuk COVID-19 dan menyertakan contoh pengkodean klinis dalam konteks COVID-</span>
<span class="t" style="left:442.4px;top:397px;font-size:13px;color:#000;transform:scaleX(1.0253);">19. Ini termasuk referensi ke definisi kasus WHO untuk pengawasan.</span>
<span class="t" style="left:442.4px;top:433px;font-size:17px;color:#000;-webkit-text-stroke:0.25px #fff;">1</span>
<span class="t" style="left:470.7px;top:433px;font-size:17px;color:#000;transform:scaleX(0.9630);-webkit-text-stroke:0.25px #fff;">Kode ICD-10 baru untuk COVID-19</span>
<span class="t" style="left:489.7px;top:457px;font-size:13px;color:#000;transform:scaleX(1.0228);">U07.1 COVID-19, virus diidentifikasi</span>
<span class="t" style="left:489.7px;top:478px;font-size:13px;color:#000;transform:scaleX(1.0283);">U07.2 COVID-19, virus tidak diidentifikasi</span>
<span class="t" style="left:538.0px;top:497px;font-size:13px;color:#000;transform:scaleX(1.0121);">Didiagnosis secara klinis-epidemiologi COVID-19</span>
<span class="t" style="left:538.0px;top:516px;font-size:13px;color:#000;">Kemungkinan COVID-19</span>
<span class="t" style="left:538.0px;top:535px;font-size:13px;color:#000;transform:scaleX(0.9903);">Diduga COVID-19</span>
<span class="t" style="left:442.3px;top:594px;font-size:13px;color:#000;transform:scaleX(1.0617);">Detail pembaruan untuk ICD-10 tersedia secara online di https://www.who.int/classifications/icd/icd10updates/en/</span>
<span class="t" style="left:515.7px;top:499px;font-size:11.5px;color:#000;">o</span>
<span class="t" style="left:515.7px;top:518px;font-size:11.5px;color:#000;">o</span>
<span class="t" style="left:515.7px;top:537px;font-size:11.5px;color:#000;">o</span>
<span class="t" style="left:7.7px;top:750px;font-size:12px;color:#444;transform:scaleX(0.9544);">Halaman 1 dari 4</span>
<span class="t" style="left:114.6px;top:750px;font-size:12px;color:#444;transform:scaleX(0.9239);">684 kata</span>
<span class="t" style="left:207.8px;top:750px;font-size:12px;color:#444;transform:scaleX(0.9286);">Bahasa Inggris (Amerika Serikat)</span>
<span class="t" style="left:407.9px;top:750px;font-size:12px;color:#444;transform:scaleX(0.9387);">Aksesibilitas: Tidak Tersedia</span>
<span class="t" style="left:1085.1px;top:750px;font-size:12px;color:#444;transform:scaleX(0.9375);">Fokus</span>
<span class="t" style="left:1392.5px;top:750px;font-size:12px;color:#444;transform:scaleX(0.8767);">100%</span>
<span class="t" style="left:240.4px;top:79px;font-size:17.5px;color:#444;transform:scaleX(0.9083);">A</span>
<span class="t" style="left:263.9px;top:82px;font-size:13.3px;color:#444;transform:scaleX(1.0111);">A</span>
<span class="t" style="left:292.6px;top:82px;font-size:13.5px;color:#444;transform:scaleX(0.9778);">A</span>
<span class="t" style="left:302.7px;top:82px;font-size:13.5px;color:#444;transform:scaleX(0.7625);">a</span>
<span class="t" style="left:337.4px;top:79px;font-size:17.5px;color:#444;transform:scaleX(0.8000);">A</span>
<span class="t" style="left:97.0px;top:113px;font-size:13px;color:#444;transform:scaleX(0.9125);font-weight:700;">B</span>
<span class="t" style="left:119.7px;top:113px;font-size:13.5px;color:#555;transform:scaleX(1.5000);font-style:italic;font-family:'Liberation Serif',serif;">I</span>
<span class="t" style="left:139.6px;top:113px;font-size:12.5px;color:#444;transform:scaleX(1.0286);">U</span>
<span class="t" style="left:176.4px;top:114px;font-size:12px;color:#444;transform:scaleX(0.9385);">ab</span>
<span class="t" style="left:201.1px;top:113px;font-size:13px;color:#444;transform:scaleX(0.9286);font-weight:700;">x</span>
<span class="t" style="left:208.1px;top:121px;font-size:7px;color:#2a8dd4;transform:scaleX(0.9000);font-weight:700;">2</span>
<span class="t" style="left:223.0px;top:113px;font-size:13px;color:#444;transform:scaleX(0.9714);font-weight:700;">x</span>
<span class="t" style="left:230.1px;top:111px;font-size:7px;color:#2a8dd4;transform:scaleX(0.8750);font-weight:700;">2</span>
<span class="t" style="left:250.4px;top:111px;font-size:19.5px;color:#e4e2e0;font-weight:700;-webkit-text-stroke:0.9px #a19f9d;">A</span>
<span class="t" style="left:325.8px;top:111px;font-size:14.5px;color:#444;transform:scaleX(0.9400);">A</span>
<span class="t" style="left:412.4px;top:79px;font-size:6.5px;color:#1e8bcd;transform:scaleX(0.7000);font-weight:700;">1</span>
<span class="t" style="left:412.4px;top:85px;font-size:6.5px;color:#1e8bcd;transform:scaleX(0.7000);font-weight:700;">2</span>
<span class="t" style="left:412.4px;top:91px;font-size:6.5px;color:#1e8bcd;transform:scaleX(0.7000);font-weight:700;">3</span>
<span class="t" style="left:449.7px;top:79px;font-size:6.5px;color:#1e8bcd;transform:scaleX(0.6250);font-weight:700;">1</span>
<span class="t" style="left:451.9px;top:84px;font-size:7.5px;color:#1e8bcd;transform:scaleX(0.8750);font-weight:700;">a</span>
<span class="t" style="left:457.0px;top:90px;font-size:7px;color:#1e8bcd;transform:scaleX(0.6000);font-weight:700;">i</span>
<span class="t" style="left:547.4px;top:79px;font-size:8.5px;color:#1e8bcd;transform:scaleX(1.1667);font-weight:700;">A</span>
<span class="t" style="left:547.6px;top:89px;font-size:8.5px;color:#3b3a39;transform:scaleX(1.1600);font-weight:700;">Z</span>
<span class="t" style="left:581.4px;top:79px;font-size:15px;color:#3b3a39;transform:scaleX(1.2500);">¶</span>
<span class="t" style="left:875.7px;top:94px;font-size:10px;color:#a93ebc;">b</span>
<span class="t" style="left:879.3px;top:101px;font-size:10.5px;color:#1e8bcd;transform:scaleX(0.8400);">c</span>
<span class="t" style="left:400.2px;top:754px;font-size:9.5px;color:#3b3a39;transform:scaleX(0.7333);font-weight:700;">?</span>
<span class="t" style="left:393.3px;top:168px;font-size:9.5px;color:#444;transform:scaleX(0.7500);">1</span>
<span class="t" style="left:468.9px;top:168px;font-size:9.5px;color:#444;transform:scaleX(0.7500);">1</span>
<span class="t" style="left:506.8px;top:168px;font-size:9.5px;color:#444;transform:scaleX(0.8800);">2</span>
<span class="t" style="left:544.6px;top:168px;font-size:9.5px;color:#444;transform:scaleX(0.8800);">3</span>
<span class="t" style="left:582.4px;top:168px;font-size:9.5px;color:#444;transform:scaleX(0.8800);">4</span>
<span class="t" style="left:620.2px;top:168px;font-size:9.5px;color:#444;transform:scaleX(0.8800);">5</span>
<span class="t" style="left:658.0px;top:168px;font-size:9.5px;color:#444;transform:scaleX(0.8800);">6</span>
<span class="t" style="left:695.8px;top:168px;font-size:9.5px;color:#444;transform:scaleX(0.8800);">7</span>
<span class="t" style="left:733.6px;top:168px;font-size:9.5px;color:#444;transform:scaleX(0.8800);">8</span>
<span class="t" style="left:771.4px;top:168px;font-size:9.5px;color:#444;transform:scaleX(0.8800);">9</span>
<span class="t" style="left:805.9px;top:168px;font-size:9.5px;color:#444;">10</span>
<span class="t" style="left:843.7px;top:168px;font-size:9.5px;color:#444;">11</span>
<span class="t" style="left:881.5px;top:168px;font-size:9.5px;color:#444;">12</span>
<span class="t" style="left:919.3px;top:168px;font-size:9.5px;color:#444;">13</span>
<span class="t" style="left:957.1px;top:168px;font-size:9.5px;color:#444;">14</span>
<span class="t" style="left:994.9px;top:168px;font-size:9.5px;color:#444;">15</span>
<span class="t" style="left:1032.7px;top:168px;font-size:9.5px;color:#444;">16</span>
<span class="t" style="left:1070.5px;top:168px;font-size:9.5px;color:#444;">17</span>
<span class="t" style="left:1108.3px;top:168px;font-size:9.5px;color:#444;">18</span>
<span class="t" style="left:1146.1px;top:168px;font-size:9.5px;color:#444;">19</span>
<span class="t" style="left:1184.9px;top:168px;font-size:9.5px;color:#444;transform:scaleX(0.9000);">20</span>
<span class="t" style="left:1222.7px;top:168px;font-size:9.5px;color:#444;transform:scaleX(0.9000);">21</span>
<span class="t" style="left:1260.5px;top:168px;font-size:9.5px;color:#444;transform:scaleX(0.9000);">22</span>
<span class="t" style="left:1298.3px;top:168px;font-size:9.5px;color:#444;transform:scaleX(0.9000);">23</span>
<span class="t" style="left:1336.1px;top:168px;font-size:9.5px;color:#444;transform:scaleX(0.9000);">24</span>
<span class="t" style="left:1373.9px;top:168px;font-size:9.5px;color:#444;transform:scaleX(0.9000);">25</span>
<!-- overlay icons (above text) -->
<svg style="left:343px;top:86px" width="11" height="11" viewBox="0 0 11 11" fill="#f3f2f1" stroke="#9a3fb0" stroke-width="1.200"><path d="M0.800 6.300L6.800 0.800L10 4.200L4 9.800z"/><path d="M2.800 4.500L6 8"/></svg>
</body>
</html>
